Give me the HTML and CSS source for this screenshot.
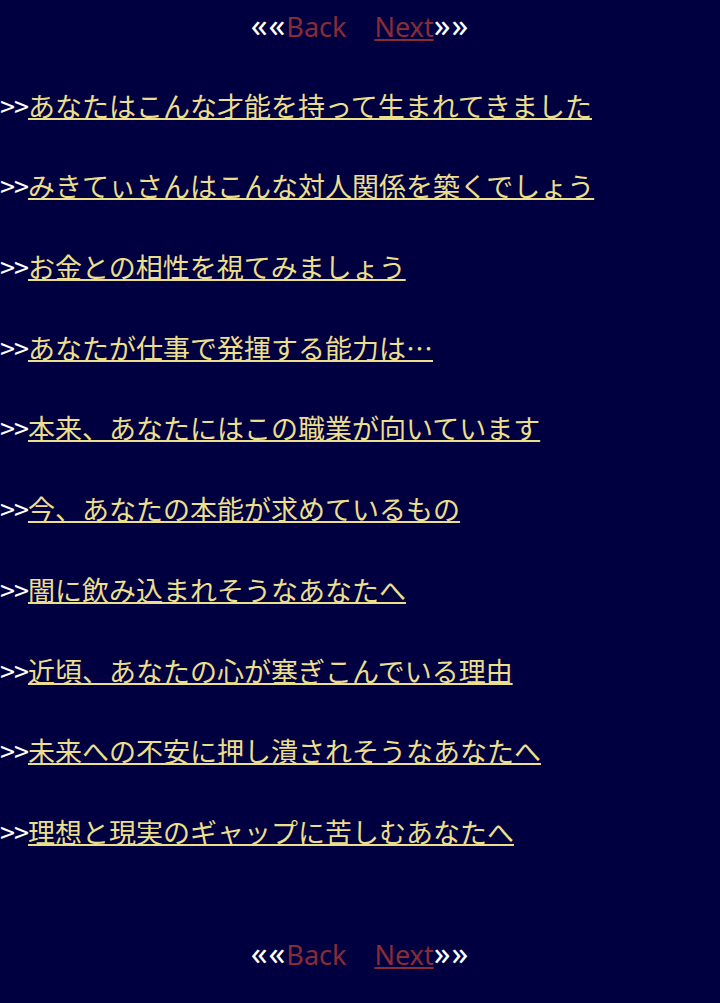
FILE: index.html
```html
<!DOCTYPE html>
<html lang="ja">
<head>
<meta charset="utf-8">
<title>Menu</title>
<link rel="stylesheet" href="styles.css">
</head>
<body>
<div class="page">
  <nav class="pager">
    <span class="arrow">««</span><span class="back">Back</span><span class="gap"></span><a class="next" href="#">Next</a><span class="arrow">»»</span>
  </nav>
  <ul class="menu">
    <li><span class="mark">&gt;&gt;</span><a href="#">あなたはこんな才能を持って生まれてきました</a></li>
    <li><span class="mark">&gt;&gt;</span><a href="#">みきてぃさんはこんな対人関係を築くでしょう</a></li>
    <li><span class="mark">&gt;&gt;</span><a href="#">お金との相性を視てみましょう</a></li>
    <li><span class="mark">&gt;&gt;</span><a href="#">あなたが仕事で発揮する能力は…</a></li>
    <li><span class="mark">&gt;&gt;</span><a href="#">本来、あなたにはこの職業が向いています</a></li>
    <li><span class="mark">&gt;&gt;</span><a href="#">今、あなたの本能が求めているもの</a></li>
    <li><span class="mark">&gt;&gt;</span><a href="#">闇に飲み込まれそうなあなたへ</a></li>
    <li><span class="mark">&gt;&gt;</span><a href="#">近頃、あなたの心が塞ぎこんでいる理由</a></li>
    <li><span class="mark">&gt;&gt;</span><a href="#">未来への不安に押し潰されそうなあなたへ</a></li>
    <li><span class="mark">&gt;&gt;</span><a href="#">理想と現実のギャップに苦しむあなたへ</a></li>
  </ul>
  <nav class="pager">
    <span class="arrow">««</span><span class="back">Back</span><span class="gap"></span><a class="next" href="#">Next</a><span class="arrow">»»</span>
  </nav>
</div>
</body>
</html>
```

FILE: styles.css
```css
html, body {
  margin: 0;
  padding: 0;
  background: #000040;
}
body {
  font-family: "Noto Sans CJK JP", "Noto Sans", sans-serif;
  font-size: 27px;
  color: #ffffff;
}
.page {
  padding-top: 5px;
  padding-bottom: 30px;
}
.pager {
  text-align: center;
  line-height: 40.35px;
  height: 40.35px;
  font-family: "Noto Sans", "Noto Sans CJK JP", sans-serif;
}
.arrow {
  color: #ffffff;
  font-size: 33px;
  font-weight: normal;
  letter-spacing: 1px;
}
.back {
  color: #8a2b38;
}
.gap {
  display: inline-block;
  width: 28px;
}
.next {
  color: #8a2b38;
  text-decoration: underline;
  text-underline-offset: 2px;
}
.menu {
  list-style: none;
  margin: 40.35px 0 80.7px 0;
  padding: 0;
}
.menu li {
  line-height: 40.35px;
  height: 40.35px;
  margin-bottom: 40.35px;
  white-space: nowrap;
}
.menu li:last-child {
  margin-bottom: 0;
}
.mark {
  color: #ffffff;
  letter-spacing: -1px;
}
.menu a {
  color: #ecdf8c;
  text-decoration: underline;
  text-underline-offset: 1px;
}
```
